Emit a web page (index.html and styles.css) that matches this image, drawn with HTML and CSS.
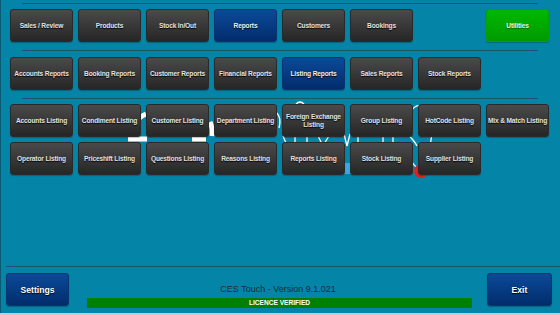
FILE: index.html
```html
<!DOCTYPE html>
<html lang="en">
<head>
  <meta charset="UTF-8">
  <title>CES Touch</title>
  <link rel="stylesheet" href="styles.css">
</head>
<body>
  <div class="screen">
    <div class="rule"></div>

    <!-- Main menu -->
    <div class="row first">
      <div class="btn">Sales / Review</div>
      <div class="btn">Products</div>
      <div class="btn">Stock In/Out</div>
      <div class="btn blue">Reports</div>
      <div class="btn">Customers</div>
      <div class="btn">Bookings</div>
      <div class="btn green utilities">Utilities</div>
    </div>

    <div class="rule"></div>

    <!-- Report groups -->
    <div class="row">
      <div class="btn">Accounts Reports</div>
      <div class="btn">Booking Reports</div>
      <div class="btn">Customer Reports</div>
      <div class="btn">Financial Reports</div>
      <div class="btn blue">Listing Reports</div>
      <div class="btn">Sales Reports</div>
      <div class="btn">Stock Reports</div>
    </div>

    <div class="rule"></div>

    <!-- Listing reports, logo shows through the gaps -->
    <div class="listings">
      <svg class="logo" viewBox="0 100 560 80" width="560" height="80">
        <g fill="none" stroke="#fff" stroke-width="5">
          <path d="M146 114 Q136 118 132 128"/>
          <path d="M128 139 H147"/>
          <path d="M192 139 H206"/>
          <path d="M210 122 Q213 128 212 136"/>
        </g>
        <g fill="none" stroke="#fff" stroke-width="1.3">
          <path d="M276 112 Q282 118 279 128"/>
          <path d="M283 136 L286 143"/>
          <path d="M295 130 V150"/>
          <path d="M307 130 V150"/>
          <path d="M317 134 L323 146 L330 134"/>
          <path d="M344 134 L347 146 L350 134"/>
          <path d="M358 130 V150"/>
          <path d="M383 130 V150"/>
          <path d="M393 130 V150"/>
          <path d="M407 134 Q414 140 417 146"/>
          <path d="M432 134 L430 146"/>
          <path d="M296 104 Q300 100 304 104"/>
          <path d="M410 112 Q416 104 420 106"/>
          <path d="M412 162 Q414 166 418 168"/>
        </g>
        <rect x="340" y="163" width="12" height="11" fill="#3aa8e0"/>
        <circle cx="421" cy="171" r="7" fill="#e0201c"/>
      </svg>
      <div class="grid">
        <div class="btn">Accounts Listing</div>
        <div class="btn">Condiment Listing</div>
        <div class="btn">Customer Listing</div>
        <div class="btn">Department Listing</div>
        <div class="btn wrap">Foreign Exchange<br>Listing</div>
        <div class="btn">Group Listing</div>
        <div class="btn">HotCode Listing</div>
        <div class="btn">Mix &amp; Match Listing</div>
        <div class="btn">Operator Listing</div>
        <div class="btn">Priceshift Listing</div>
        <div class="btn">Questions Listing</div>
        <div class="btn">Reasons Listing</div>
        <div class="btn">Reports Listing</div>
        <div class="btn">Stock Listing</div>
        <div class="btn">Supplier Listing</div>
      </div>
    </div>

    <div class="spacer"></div>
    <div class="rule wide"></div>

    <div class="footer">
      <div class="btn blue big">Settings</div>
      <div class="status">
        <div class="version">CES Touch - Version 9.1.021</div>
        <div class="licence">LICENCE VERIFIED</div>
      </div>
      <div class="btn blue big exit">Exit</div>
    </div>
  </div>
</body>
</html>
```

FILE: styles.css
```css
html, body {
  margin: 0;
  padding: 0;
}

body {
  width: 560px;
  height: 315px;
  overflow: hidden;
  font-family: "Liberation Sans", Arial, sans-serif;
}

.screen {
  box-sizing: border-box;
  height: 315px;
  padding-top: 3px;
  display: flex;
  flex-direction: column;
  background-color: #0485a8;
  border-bottom: 2px solid #c4ccd0;
  box-shadow: inset 1px 0 0 #0a5a72;
}

.rule {
  height: 1px;
  margin-left: 22px;
  width: 516px;
  background-color: #1b5568;
  flex-shrink: 0;
}

.rule.wide {
  margin-left: 6px;
  width: 554px;
}

.row,
.grid {
  display: grid;
  grid-template-columns: repeat(8, 63px);
  gap: 5px;
  padding-left: 10px;
}

.row {
  margin: 5px 0 8px;
}

.row + .rule + .row {
  margin-top: 6px;
}

.utilities {
  grid-column: 8;
}

.listings {
  position: relative;
  margin-top: 5px;
}

.logo {
  position: absolute;
  left: 0;
  top: -4px;
}

.grid {
  position: relative;
}

.btn {
  box-sizing: border-box;
  width: 63px;
  height: 33px;
  padding: 0;
  display: flex;
  justify-content: center;
  align-items: center;
  text-align: center;
  font-weight: bold;
  font-size: 6.6px;
  line-height: 8px;
  letter-spacing: -0.15px;
  white-space: nowrap;
  color: #e4e4e4;
  text-shadow: 0 1px 1px #000;
  background: linear-gradient(#4a4a4a, #262626);
  border: 1px solid #2a2a2a;
  border-radius: 3px;
  box-shadow: 0 1px 1px rgba(0, 0, 0, 0.25);
}

.btn.wrap {
  white-space: normal;
}

.btn.blue {
  background: linear-gradient(#0b4a98, #022c6c);
  border-color: #0a3470;
  color: #f0f0f0;
}

.btn.green {
  background: linear-gradient(#00b800, #009a00);
  border-color: #08a008;
  color: #f0f0f0;
  text-shadow: 0 1px 1px #046004;
}

.spacer {
  flex: 1;
}

.footer {
  display: flex;
  height: 35px;
  margin: 6px 0 5px;
  padding: 0 8px 0 6px;
}

.btn.big {
  font-size: 8.6px;
  letter-spacing: 0;
  color: #fff;
}

.btn.exit {
  width: 65px;
}

.status {
  flex: 1;
  display: flex;
  flex-direction: column;
  justify-content: flex-end;
}

.version {
  text-align: center;
  font-size: 9px;
  line-height: 12px;
  color: #1c2c34;
  margin-bottom: 3px;
}

.licence {
  height: 10px;
  margin: 0 15px 0 18px;
  background-color: #008000;
  color: #fff;
  font-weight: bold;
  font-size: 6.6px;
  line-height: 10px;
  text-align: center;
}
```
